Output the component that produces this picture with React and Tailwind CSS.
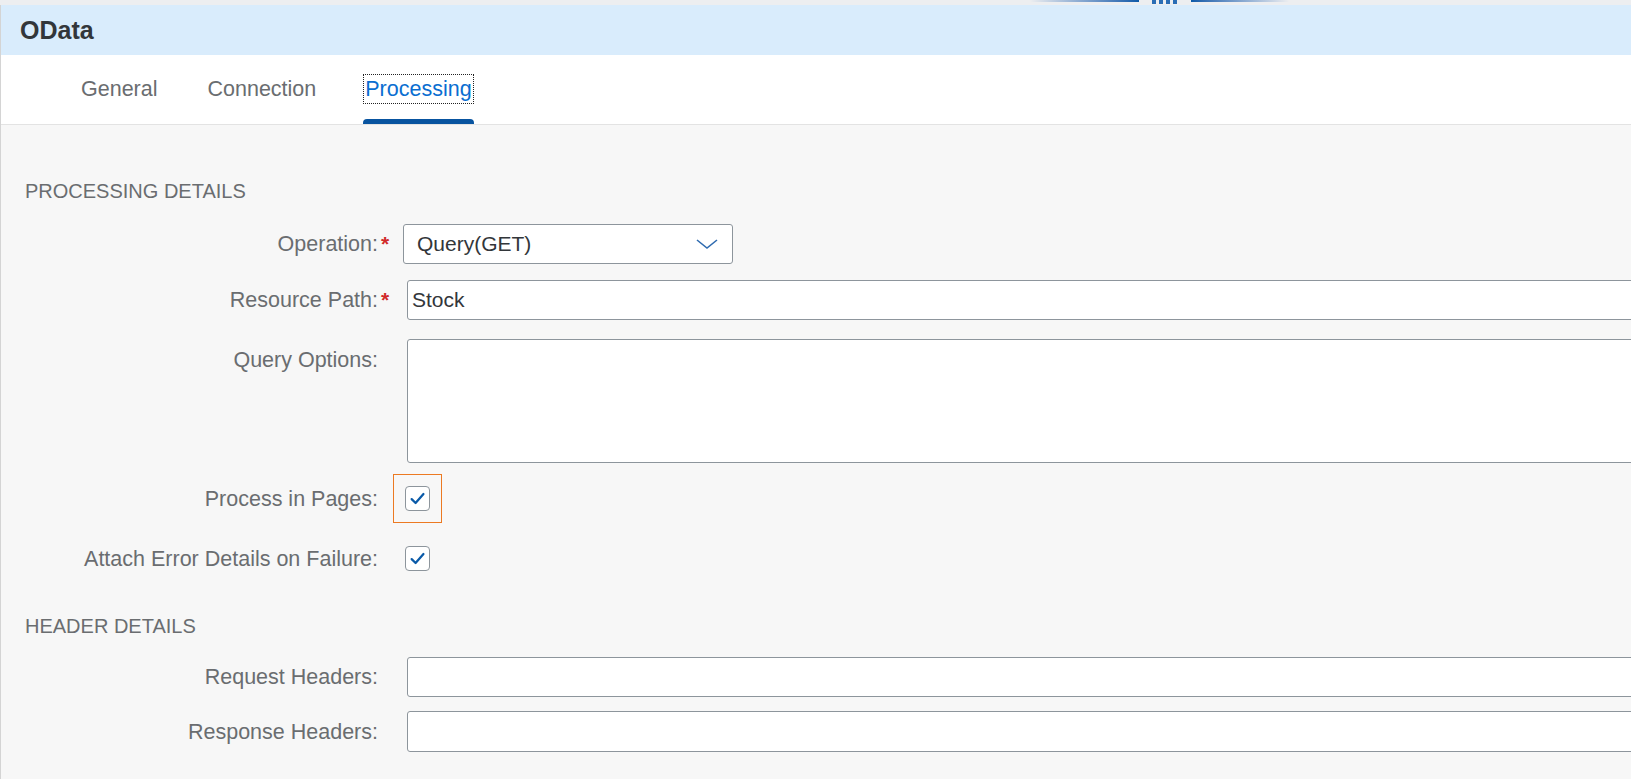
import React from "react";

function Label({ text, required, top }) {
  return (
    <div
      className={`w-[392px] shrink-0 flex justify-end pr-[2px] ${top ? "self-start pt-[9px]" : ""}`}
    >
      <span className="text-[21.5px] leading-[24px] text-[#6a6d70] whitespace-nowrap">{text}</span>
      <span className="w-[13px] text-[21px] leading-[24px] text-[#d12a2a] font-bold pl-[3px]">
        {required ? "*" : ""}
      </span>
    </div>
  );
}

function Check() {
  return (
    <div className="w-[25px] h-[25px] rounded-[4px] border-[1.5px] border-[#8d959c] bg-white flex items-center justify-center">
      <svg width="17" height="17" viewBox="0 0 16 16" fill="none">
        <path d="M2.5 8.6 L6.2 12.2 L13.6 3.8" stroke="#0a5aa8" strokeWidth="2.1" strokeLinecap="round" strokeLinejoin="round" />
      </svg>
    </div>
  );
}

export default function App() {
  return (
    <div className="w-[1631px] h-[779px] overflow-hidden bg-[#f7f7f7] font-['Liberation_Sans',Arial,sans-serif]">
      {/* top strip with splitter handle */}
      <div className="h-[5px] bg-[#edeef0] flex items-start">
        <div className="ml-[1030px] w-[109px] h-[2px] bg-gradient-to-r from-[#edeef0] to-[#0a5aa8]" />
        <div className="ml-[13px] flex gap-[3px]">
          <div className="w-[4px] h-[4px] bg-[#2a6db5]" />
          <div className="w-[4px] h-[4px] bg-[#2a6db5]" />
          <div className="w-[4px] h-[4px] bg-[#2a6db5]" />
          <div className="w-[4px] h-[4px] bg-[#2a6db5]" />
        </div>
        <div className="ml-[14px] w-[98px] h-[2px] bg-gradient-to-r from-[#0a5aa8] to-[#edeef0]" />
      </div>

      <div className="border-l border-[#d4d4d4] h-[774px] flex flex-col">
        {/* header */}
        <div className="h-[50px] bg-[#d9ecfc] flex items-center pl-[19px]">
          <span className="text-[25px] font-bold text-[#32363a] leading-none">OData</span>
        </div>

        {/* tabs */}
        <div className="h-[70px] bg-white border-b border-[#e3e3e3] flex items-stretch pl-[73px]">
          <div className="flex flex-col items-center px-[5px]">
            <div className="flex-1 flex items-center pt-[3px]">
              <span className="text-[21.5px] text-[#6a6d70] leading-[28px] px-[1px] border border-transparent">General</span>
            </div>
            <div className="h-[5px] w-full" />
          </div>
          <div className="flex flex-col items-center px-[5px] ml-[36px]">
            <div className="flex-1 flex items-center pt-[3px]">
              <span className="text-[21.5px] text-[#6a6d70] leading-[28px] px-[1px] border border-transparent">Connection</span>
            </div>
            <div className="h-[5px] w-full" />
          </div>
          <div className="flex flex-col items-center px-[3px] ml-[37px]">
            <div className="flex-1 flex items-center pt-[3px]">
              <span className="text-[21.5px] text-[#0a6ed1] leading-[28px] px-[1px] border border-dotted border-[#222]">Processing</span>
            </div>
            <div className="h-[5px] w-full bg-[#0854a0] rounded-t-[4px]" />
          </div>
        </div>

        {/* content */}
        <div className="flex-1 overflow-hidden flex flex-col">
          <div className="mt-[54px] pl-[24px] h-[24px] text-[20px] leading-[24px] text-[#6a6d70]">PROCESSING DETAILS</div>

          <div className="mt-[21px] h-[40px] flex items-center">
            <Label text="Operation:" required />
            <div className="ml-[10px] w-[330px] h-[40px] bg-white border border-[#8d959c] rounded-[3px] flex items-center justify-between pl-[13px] pr-[13px]">
              <span className="text-[21px] text-[#32363a]">Query(GET)</span>
              <svg width="24" height="14" viewBox="0 0 24 14" fill="none">
                <path d="M2 3 L12 11 L22 3" stroke="#2f6bb0" strokeWidth="1.6" />
              </svg>
            </div>
          </div>

          <div className="mt-[16px] h-[40px] flex items-center">
            <Label text="Resource Path:" required />
            <div className="ml-[14px] flex-1 mr-[-10px] h-[40px] bg-white border border-[#8d959c] rounded-[3px] flex items-center pl-[4px]">
              <span className="text-[21px] text-[#32363a]">Stock</span>
            </div>
          </div>

          <div className="mt-[19px] h-[124px] flex items-start">
            <Label text="Query Options:" top />
            <div className="ml-[14px] flex-1 mr-[-10px] h-[124px] bg-white border border-[#8d959c] rounded-[3px]" />
          </div>

          <div className="mt-[11px] h-[49px] flex items-center">
            <Label text="Process in Pages:" />
            <div className="w-[49px] h-[49px] border-[1.5px] border-[#ec7a22] flex items-center justify-center">
              <Check />
            </div>
          </div>

          <div className="mt-[23px] h-[25px] flex items-center">
            <Label text="Attach Error Details on Failure:" />
            <div className="ml-[12px]">
              <Check />
            </div>
          </div>

          <div className="mt-[43px] pl-[24px] h-[24px] text-[20px] leading-[24px] text-[#6a6d70]">HEADER DETAILS</div>

          <div className="mt-[19px] h-[40px] flex items-center">
            <Label text="Request Headers:" />
            <div className="ml-[14px] flex-1 mr-[-10px] h-[40px] bg-white border border-[#8d959c] rounded-[3px]" />
          </div>

          <div className="mt-[14px] h-[41px] flex items-center">
            <Label text="Response Headers:" />
            <div className="ml-[14px] flex-1 mr-[-10px] h-[41px] bg-white border border-[#8d959c] rounded-[3px]" />
          </div>
        </div>
      </div>
    </div>
  );
}
